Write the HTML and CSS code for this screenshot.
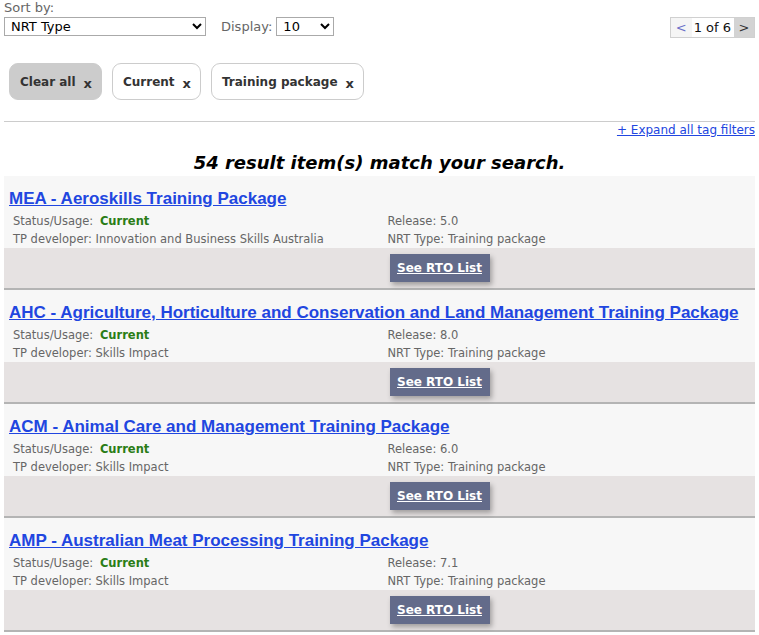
FILE: index.html
```html
<!DOCTYPE html>
<html>
<head>
<meta charset="utf-8">
<link rel="stylesheet" href="styles.css">
</head>
<body>
<div class="topbar">
  <div class="sorts">
    <div class="sortby">
      <label class="lbl">Sort by:</label>
      <div class="controls">
        <select class="sel sel-sort"><option>NRT Type</option></select>
        <span class="lbl disp">Display:</span>
        <select class="sel sel-disp"><option>10</option></select>
      </div>
    </div>
  </div>
  <div class="pager">
    <span class="pg prev">&lt;</span>
    <span class="pg cur">1 of 6</span>
    <span class="pg next">&gt;</span>
  </div>
</div>

<div class="tags">
  <span class="tag clear">Clear all <b class="x">x</b></span>
  <span class="tag">Current <b class="x">x</b></span>
  <span class="tag">Training package <b class="x">x</b></span>
</div>

<hr class="rule">
<div class="expand"><a href="#">+ Expand all tag filters</a></div>

<h2 class="count">54 result item(s) match your search.</h2>

<div class="results">
  <div class="item">
    <a class="title" href="#">MEA - Aeroskills Training Package</a>
    <div class="details">
      <div class="cell"><span>Status/Usage:</span> <b class="current">Current</b></div>
      <div class="cell">Release: 5.0</div>
      <div class="cell">TP developer: Innovation and Business Skills Australia</div>
      <div class="cell">NRT Type: Training package</div>
    </div>
    <div class="foot"><div></div><div><a class="btn" href="#">See RTO List</a></div></div>
  </div>
  <div class="item">
    <a class="title" href="#">AHC - Agriculture, Horticulture and Conservation and Land Management Training Package</a>
    <div class="details">
      <div class="cell"><span>Status/Usage:</span> <b class="current">Current</b></div>
      <div class="cell">Release: 8.0</div>
      <div class="cell">TP developer: Skills Impact</div>
      <div class="cell">NRT Type: Training package</div>
    </div>
    <div class="foot"><div></div><div><a class="btn" href="#">See RTO List</a></div></div>
  </div>
  <div class="item">
    <a class="title" href="#">ACM - Animal Care and Management Training Package</a>
    <div class="details">
      <div class="cell"><span>Status/Usage:</span> <b class="current">Current</b></div>
      <div class="cell">Release: 6.0</div>
      <div class="cell">TP developer: Skills Impact</div>
      <div class="cell">NRT Type: Training package</div>
    </div>
    <div class="foot"><div></div><div><a class="btn" href="#">See RTO List</a></div></div>
  </div>
  <div class="item">
    <a class="title" href="#">AMP - Australian Meat Processing Training Package</a>
    <div class="details">
      <div class="cell"><span>Status/Usage:</span> <b class="current">Current</b></div>
      <div class="cell">Release: 7.1</div>
      <div class="cell">TP developer: Skills Impact</div>
      <div class="cell">NRT Type: Training package</div>
    </div>
    <div class="foot"><div></div><div><a class="btn" href="#">See RTO List</a></div></div>
  </div>
</div>
</body>
</html>
```
FILE: styles.css
```css
* { box-sizing: border-box; }
body {
  margin: 0;
  padding: 0 4px;
  font-family: "DejaVu Sans", Verdana, sans-serif;
  color: #333;
  background: #fff;
}
.topbar {
  display: flex;
  justify-content: space-between;
  align-items: flex-start;
}
.lbl {
  font-size: 13px;
  color: #666;
  line-height: 16px;
  display: block;
}
.controls {
  display: flex;
  align-items: center;
  margin-top: 1px;
}
.disp { display: inline; margin: 0 4px 0 15px; }
.sel {
  font-family: "DejaVu Sans", Verdana, sans-serif;
  font-size: 13px;
  height: 19px;
  border: 1px solid #aaa;
  border-radius: 0;
  background: #fff;
  color: #000;
  padding: 0 2px;
}
.sel-sort { width: 202px; }
.sel-disp { width: 58px; }
.pager {
  display: flex;
  margin-top: 17px;
  border: 1px solid #d0d0d0;
  height: 21px;
  font-size: 13px;
  line-height: 19px;
}
.pg { display: block; }
.prev { background: #f5f5f5; color: #6b70c9; width: 21px; text-align: center; }
.cur { background: #fff; color: #111; padding: 0 3px 0 2px; }
.next { background: #d3d3d3; color: #333; width: 20px; text-align: center; }

.tags {
  display: flex;
  gap: 10px;
  margin: 25px 0 0 5px;
}
.tag {
  display: inline-flex;
  align-items: center;
  height: 37px;
  padding: 0 9px 0 10px;
  border: 1px solid #ccc;
  border-radius: 9px;
  font-size: 12px;
  font-weight: bold;
  color: #333;
  background: #fff;
}
.tag .x { margin-left: 8px; position: relative; top: 2px; font-size: 13px; }
.clear { background: #ccc; border-color: #ccc; }

.rule {
  border: 0;
  border-top: 1px solid #ccc;
  margin: 21px 0 0;
}
.expand {
  text-align: right;
  font-size: 12px;
  line-height: 14px;
  margin-top: 1px;
}
.expand a { color: #2146e0; }

.count {
  text-align: center;
  font-size: 18px;
  font-style: italic;
  font-weight: bold;
  color: #000;
  margin: 14px 0 1px;
  line-height: 24px;
}
.item {
  background: #f7f7f7;
  border-bottom: 2px solid #b4b4b4;
  padding-top: 13px;
}
.title {
  display: block;
  padding-left: 5px;
  font-family: "Liberation Sans", Arial, sans-serif;
  font-weight: bold;
  font-size: 17px;
  line-height: 20px;
  color: #2146e0;
}
.details {
  display: grid;
  grid-template-columns: 1fr 1fr;
  font-size: 11.5px;
  color: #666;
  line-height: 18px;
  margin-top: 3px;
}
.cell { padding-left: 9px; }
.cell:nth-child(2n) { padding-left: 8px; }
.current { color: #2a7d16; margin-left: 3px; }
.foot {
  display: grid;
  grid-template-columns: 1fr 1fr;
  background: #e6e2e2;
  height: 40px;
  padding-top: 6px;
}
.btn {
  display: inline-block;
  margin-left: 10px;
  width: 100px;
  height: 28px;
  line-height: 28px;
  text-align: center;
  background: #636b8a;
  color: #fff;
  font-weight: bold;
  font-size: 12px;
  box-shadow: 2px 3px 5px rgba(0,0,0,0.3);
}
```
